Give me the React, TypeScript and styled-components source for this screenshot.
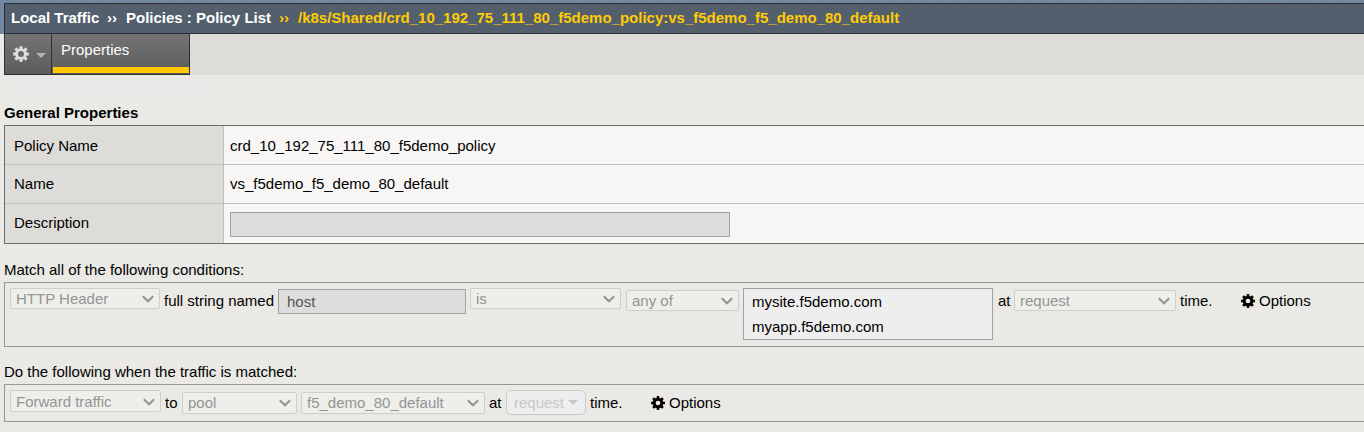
import React from "react";
import styled, { createGlobalStyle } from "styled-components";

const GlobalStyle = createGlobalStyle`
  * { box-sizing: border-box; }
  body {
    margin: 0;
    overflow: hidden;
    background: #eae9e5;
    color: #000;
    font: 15px/18px "Liberation Sans", Arial, sans-serif;
  }
`;

const Page = styled.div`
  height: 432px;
  overflow: hidden;
`;

const Masthead = styled.header`
  height: 34px;
  padding: 3px 0 0 4px;
  background: repeating-linear-gradient(45deg, #70869f 0 2px, #788ca4 2px 3px);
`;

const Breadcrumb = styled.nav`
  display: flex;
  height: 31px;
  padding: 5px 0 0 6px;
  border: 1px solid #2b2d36;
  border-right: 0;
  background: #535f6c;
  color: #fff;
  font-weight: bold;
  white-space: pre;
`;

const Crumb = styled.span<{ $width?: number; $current?: boolean }>`
  flex: none;
  width: ${(p) => (p.$width ? `${p.$width}px` : "auto")};
  color: ${(p) => (p.$current ? "#ffcb05" : "#fff")};
`;

const TabBar = styled.div`
  display: flex;
  height: 41px;
  margin-left: 4px;
  background: #dddcd8;
`;

const SubTabBar = styled.div`
  width: 203px;
  height: 23px;
  margin-left: 4px;
  background: #e8e8e7;
`;

const GearTab = styled.div`
  display: flex;
  align-items: center;
  width: 48px;
  height: 41px;
  padding-left: 8px;
  border: solid #303030;
  border-width: 0 1px 1px;
  background: linear-gradient(#747474, #5c5c5c);
`;

const Caret = styled.span<{ $color: string; $gap: number; $size: number; $drop?: number }>`
  width: 0;
  height: 0;
  margin: ${(p) => p.$drop ?? 0}px 0 0 ${(p) => p.$gap}px;
  border: ${(p) => p.$size}px solid transparent;
  border-top-color: ${(p) => p.$color};
  border-bottom: 0;
`;

const Tab = styled.div`
  width: 138px;
  height: 41px;
  padding-left: 1px;
  border: solid #303030;
  border-width: 0 1px 1px 0;
  background: linear-gradient(#747474, #5c5c5c);
`;

const TabLabel = styled.div`
  height: 39px;
  padding: 7px 0 0 8px;
  border-bottom: 6px solid #ffc800;
  color: #fff;
`;

const Section = styled.section<{ $top: number }>`
  margin: ${(p) => p.$top}px 0 0 4px;
`;

const Heading = styled.h2`
  height: 21px;
  margin: 0;
  font-size: 15px;
  line-height: 18px;
`;

const Table = styled.div`
  border: 1px solid #6c6c6c;
  border-right: 0;
`;

const Row = styled.div<{ $height: number }>`
  display: flex;
  height: ${(p) => p.$height}px;
  & + & { border-top: 1px solid #c0bfbc; }
`;

const Label = styled.div<{ $pad: number }>`
  width: 219px;
  padding: ${(p) => p.$pad}px 0 0 9px;
  border-right: 1px solid #c0bfbc;
  background: #dddcd8;
`;

const Value = styled.div<{ $pad: number }>`
  flex: 1;
  padding: ${(p) => p.$pad}px 0 0 6px;
  background: #f7f6f4;
`;

const Field = styled.div<{ $width: number; $top?: number }>`
  flex: none;
  width: ${(p) => p.$width}px;
  height: 25px;
  margin-top: ${(p) => p.$top ?? 0}px;
  padding: 3px 8px;
  border: 1px solid #a2a2a2;
  background: #dddddd;
  color: #555;
`;

const Caption = styled.p`
  height: 21px;
  margin: 0;
`;

const Rule = styled.div<{ $height: number }>`
  display: flex;
  align-items: flex-start;
  height: ${(p) => p.$height}px;
  padding-left: 5px;
  border: 1px solid #999897;
  border-right: 0;
  white-space: nowrap;
`;

const SelectBox = styled.div<{ $width: number; $height: number; $left: number; $top: number; $drop: number }>`
  display: flex;
  flex: none;
  align-items: center;
  justify-content: space-between;
  width: ${(p) => p.$width}px;
  height: ${(p) => p.$height}px;
  margin: ${(p) => p.$top}px 0 0 ${(p) => p.$left}px;
  padding: ${(p) => p.$drop}px 5px 0;
  border: 1px solid #cfcfca;
  border-radius: 2px;
  background: #eeefea;
  color: #949494;
`;

const Word = styled.span<{ $width: number; $left?: number }>`
  flex: none;
  width: ${(p) => p.$width}px;
  margin: 9px 0 0 ${(p) => p.$left ?? 0}px;
`;

const ValueList = styled.div`
  flex: none;
  width: 250px;
  height: 52px;
  margin: 5px 0 0 4px;
  padding: 0 8px;
  border: 1px solid #a2a2a2;
  background: #eeeeee;
  line-height: 25px;
`;

const TimeButton = styled.div`
  display: flex;
  flex: none;
  align-items: center;
  width: 80px;
  height: 25px;
  margin: 5px 0 0 4px;
  padding-left: 7px;
  border: 1px solid #cacaca;
  border-radius: 5px;
  background: #eeeeee;
  color: #c8c8c8;
`;

const Options = styled.div`
  display: flex;
  gap: 4px;
  margin: 9px 0 0 23px;

  svg { margin-top: 2px; }
`;

const Gear = ({ size, color, ring }: { size: number; color: string; ring: number }) => (
  <svg width={size} height={size} viewBox="0 0 16 16" fill="none" stroke={color}>
    <circle cx="8" cy="8" r="4.4" strokeWidth={ring} />
    <g strokeWidth="3">
      {[0, 45, 90, 135, 180, 225, 270, 315].map((a) => (
        <path key={a} d="M8 .1V3.2" transform={`rotate(${a} 8 8)`} />
      ))}
    </g>
  </svg>
);

type SelectProps = { text: string; width: number; height?: number; left?: number; top: number; drop?: number };

const Select = ({ text, width, height = 21, left = 0, top, drop = 0 }: SelectProps) => (
  <SelectBox $width={width} $height={height} $left={left} $top={top} $drop={drop}>
    {text}
    <svg width="12" height="8" viewBox="0 0 12 8" fill="none" stroke="#949494" strokeWidth="2.1">
      <path d="M.8 1.2 6 6.2l5.2-5" />
    </svg>
  </SelectBox>
);

export default function App() {
  return (
    <Page>
      <GlobalStyle />
      <Masthead>
        <Breadcrumb>
          <Crumb $width={96}>Local Traffic</Crumb>
          <Crumb $width={19}>››</Crumb>
          <Crumb $width={153}>Policies : Policy List</Crumb>
          <Crumb $width={19} $current>››</Crumb>
          <Crumb $current>/k8s/Shared/crd_10_192_75_111_80_f5demo_policy:vs_f5demo_f5_demo_80_default</Crumb>
        </Breadcrumb>
      </Masthead>
      <TabBar>
        <GearTab>
          <Gear size={16} color="#dedede" ring={2.9} />
          <Caret $color="#b4b4b4" $gap={7} $size={5} $drop={3} />
        </GearTab>
        <Tab>
          <TabLabel>Properties</TabLabel>
        </Tab>
      </TabBar>
      <SubTabBar />

      <Section $top={6}>
        <Heading>General Properties</Heading>
        <Table>
          <Row $height={38}>
            <Label $pad={11}>Policy Name</Label>
            <Value $pad={11}>crd_10_192_75_111_80_f5demo_policy</Value>
          </Row>
          <Row $height={39}>
            <Label $pad={10}>Name</Label>
            <Value $pad={10}>vs_f5demo_f5_demo_80_default</Value>
          </Row>
          <Row $height={40}>
            <Label $pad={10}>Description</Label>
            <Value $pad={8}>
              <Field $width={500} />
            </Value>
          </Row>
        </Table>
      </Section>

      <Section $top={17}>
        <Caption>Match all of the following conditions:</Caption>
        <Rule $height={65}>
          <Select text="HTTP Header" width={150} top={5} />
          <Word $left={4} $width={114}>full string named</Word>
          <Field $width={188} $top={6}>host</Field>
          <Select text="is" width={151} left={4} top={5} />
          <Select text="any of" width={113} left={5} top={7} />
          <ValueList>
            <div>mysite.f5demo.com</div>
            <div>myapp.f5demo.com</div>
          </ValueList>
          <Word $left={5} $width={16}>at</Word>
          <Select text="request" width={162} top={7} />
          <Word $left={4} $width={38}>time.</Word>
          <Options>
            <Gear size={14} color="#000" ring={3.4} />
            Options
          </Options>
        </Rule>
      </Section>

      <Section $top={16}>
        <Caption>Do the following when the traffic is matched:</Caption>
        <Rule $height={38}>
          <Select text="Forward traffic" width={151} height={22} top={5} drop={1} />
          <Word $left={4} $width={17}>to</Word>
          <Select text="pool" width={115} height={22} top={7} />
          <Select text="f5_demo_80_default" width={184} height={22} left={4} top={7} />
          <Word $left={4} $width={13}>at</Word>
          <TimeButton>
            request
            <Caret $color="#c8c8c8" $gap={4} $size={5} />
          </TimeButton>
          <Word $left={4} $width={38}>time.</Word>
          <Options>
            <Gear size={14} color="#000" ring={3.4} />
            Options
          </Options>
        </Rule>
      </Section>
    </Page>
  );
}
